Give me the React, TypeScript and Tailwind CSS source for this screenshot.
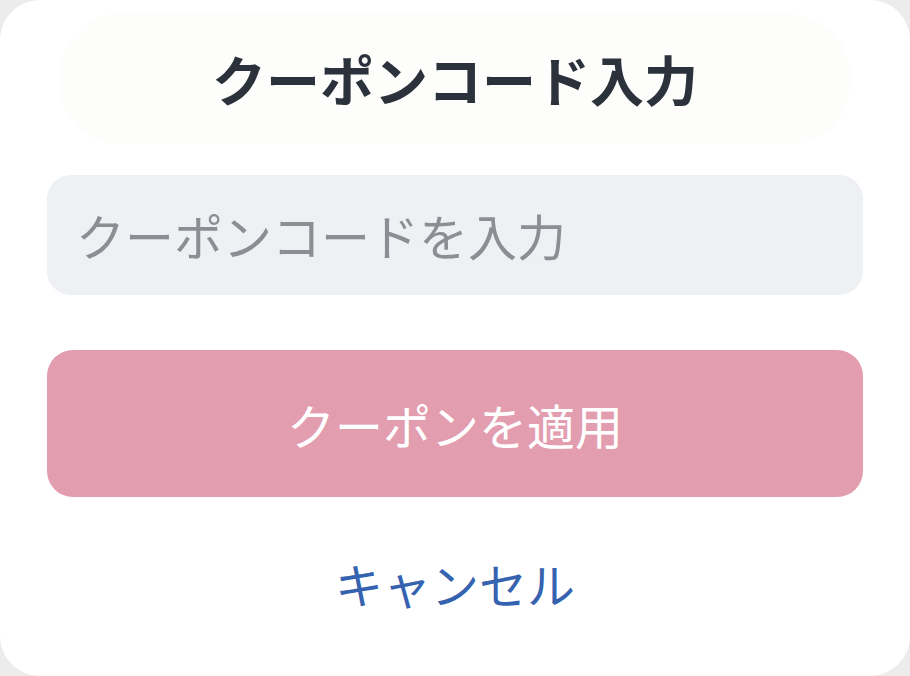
import React from "react";

export default function App() {
  const font = { fontFamily: '"Noto Sans CJK JP", "Noto Sans", sans-serif' };
  return (
    <div className="w-[910px] h-[676px] bg-[#ececec]" style={font}>
      <div className="w-full h-full rounded-[40px] bg-white flex flex-col px-[47px]">
        <div className="h-[158px] flex items-center justify-center">
          <div className="w-[790px] h-[130px] rounded-[60px] bg-[#fdfdfc] flex items-center justify-center">
            <h1 className="text-[54px] leading-none font-bold text-[#2b323b]">
              クーポンコード入力
            </h1>
          </div>
        </div>
        <div className="mt-[17px] h-[120px] rounded-[24px] bg-[#eef0f4] flex items-center px-[29px]">
          <input
            className="w-full bg-transparent outline-none text-[49px] text-[#8b8e93] placeholder:text-[#8b8e93]"
            placeholder="クーポンコードを入力"
            style={font}
          />
        </div>
        <button
          className="mt-[55px] h-[147px] rounded-[26px] bg-[#e29daf] text-white text-[48px] flex items-center justify-center"
          style={font}
        >
          クーポンを適用
        </button>
        <div className="mt-[56px] h-[60px] flex items-center justify-center text-[48px] text-[#3563b0]">
          キャンセル
        </div>
      </div>
    </div>
  );
}
